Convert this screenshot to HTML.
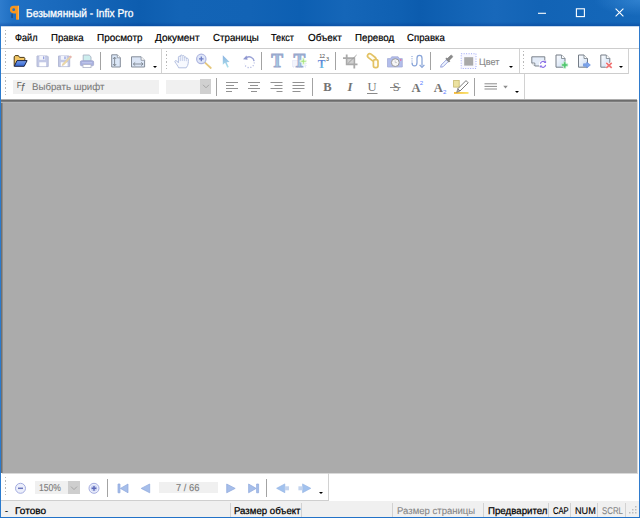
<!DOCTYPE html>
<html lang="ru">
<head>
<meta charset="utf-8">
<title>Безымянный - Infix Pro</title>
<style>
html,body{margin:0;padding:0;}
body{width:640px;height:518px;overflow:hidden;background:#fff;position:relative;font-family:"Liberation Sans",sans-serif;font-size:12px;color:#000;}
.abs{position:absolute;}
#title{left:0;top:0;width:640px;height:26px;background:radial-gradient(ellipse 46px 16px at 640px 0,rgba(70,150,225,.55),rgba(70,150,225,0)),linear-gradient(to bottom,rgba(0,50,130,0) 0,rgba(0,50,130,0) 22px,rgba(0,50,140,.35) 26px),linear-gradient(to right,#2e7ccd 0,#2070c3 12px,#1969bc 60px,#0d5daf 140px,#1364b6 180px,#1263b5 250px,#0d5fb2 300px,#1566b8 345px,#0f60b2 400px,#0c5cae 420px,#1465b7 470px,#1868ba 495px,#1263b5 540px,#1568ba 640px);}
#title:after{content:"";position:absolute;left:0;top:26px;width:640px;height:1px;background:rgba(20,100,184,.25);}
#bl{left:0;top:26px;width:1px;height:492px;background:#2a7acd;}
#br{left:639px;top:26px;width:1px;height:492px;background:#2f7bcd;}
#bb{left:0;top:517px;width:640px;height:1px;background:#2272c8;}
.hl{height:1px;background:#cdcdcd;}
.vl{width:1px;background:#d2d2d2;}
.sep{width:1px;background:#a3a3a3;}
.grip{width:1.2px;background:repeating-linear-gradient(to bottom,#b8b8b8 0,#b8b8b8 1.2px,rgba(255,255,255,0) 1.2px,rgba(255,255,255,0) 3.44px);}
#doc{left:1px;top:99px;width:636px;height:374px;box-shadow:1px 1px 0 rgba(171,171,171,.45);background:linear-gradient(to bottom,#adadad 0,#adadad 1px,#6c6c6c 1px,#6c6c6c 2px,#7e7e7e 2px,#7e7e7e 3px,#b4b4b4 3px,#b4b4b4 4px,rgba(171,171,171,0) 4px),linear-gradient(to right,#707070 0,#707070 1px,#8c8c8c 1px,#8c8c8c 1.6px,#ababab 1.6px);}
#status{left:1px;top:501px;width:638px;height:16px;background:#f0f0f0;}
.t{position:absolute;line-height:14px;white-space:nowrap;transform-origin:0 0;}
.box{background:#f0f0f0;}
.dd{width:0;height:0;border-left:2.2px solid transparent;border-right:2.2px solid transparent;border-top:2.6px solid #000;}
svg{position:absolute;overflow:visible;}
</style>
</head>
<body>
<!-- title bar -->
<div id="title" class="abs">
</div>
<div id="bl" class="abs"></div><div id="br" class="abs"></div>

<!-- menu -->
<div class="abs grip" style="left:4.6px;top:29.6px;height:15px"></div>
<div class="abs hl" style="left:1px;top:48px;width:638px"></div>

<!-- toolbar 1 -->
<div class="abs grip" style="left:4.6px;top:51.3px;height:18.6px"></div>
<div class="abs hl" style="left:1px;top:73px;width:628px"></div>
<div class="abs vl" style="left:161px;top:49px;height:24px"></div>
<div class="abs grip" style="left:166.2px;top:51.3px;height:18.6px"></div>
<div class="abs vl" style="left:519px;top:49px;height:24px"></div>
<div class="abs grip" style="left:523px;top:51.3px;height:18.6px"></div>
<div class="abs vl" style="left:628px;top:49px;height:25px"></div>
<div class="abs sep" style="left:100px;top:52px;height:18px"></div>
<div class="abs sep" style="left:261px;top:52px;height:18px"></div>
<div class="abs sep" style="left:335px;top:52px;height:18px"></div>
<div class="abs sep" style="left:430px;top:52px;height:18px"></div>
<div class="abs dd" style="left:152.7px;top:65.7px"></div>
<div class="abs dd" style="left:509.2px;top:65.7px"></div>
<div class="abs dd" style="left:619.4px;top:65.7px"></div>

<!-- toolbar 2 -->
<div class="abs grip" style="left:4.6px;top:76.8px;height:18.6px"></div>
<div class="abs vl" style="left:524px;top:74px;height:25px"></div>
<div class="abs box" style="left:13px;top:79.800px;width:145.800px;height:13.800px"></div>
<div class="abs box" style="left:166.200px;top:79.800px;width:34px;height:13.800px"></div>
<div class="abs" style="left:199.800px;top:79.400px;width:11.700px;height:14.200px;background:#d0d0d0"></div>
<div class="abs sep" style="left:216px;top:78px;height:18px"></div>
<div class="abs sep" style="left:312px;top:78px;height:18px"></div>
<div class="abs sep" style="left:474px;top:78px;height:18px"></div>
<div class="abs dd" style="left:515.3px;top:90.6px"></div>

<!-- document area -->
<div id="doc" class="abs"></div>

<!-- bottom toolbar -->
<div class="abs grip" style="left:4.6px;top:477px;height:18.6px"></div>
<div class="abs vl" style="left:328px;top:473px;height:28px"></div>
<div class="abs hl" style="left:1px;top:500px;width:328px;background:#cfcfcf"></div>
<div class="abs sep" style="left:107px;top:479px;height:18px"></div>
<div class="abs sep" style="left:266px;top:479px;height:18px"></div>
<div class="abs box" style="left:34.600px;top:481px;width:33.600px;height:13.400px"></div>
<div class="abs" style="left:68.200px;top:480.700px;width:11.700px;height:13.700px;background:#cecece"></div>
<div class="abs box" style="left:158.900px;top:481.800px;width:58.700px;height:11.700px"></div>
<div class="abs dd" style="left:319.1px;top:492.2px"></div>

<!-- status bar -->
<div id="status" class="abs"></div>
<div class="abs vl" style="left:230px;top:503px;height:14px"></div>
<div class="abs vl" style="left:301px;top:503px;height:14px"></div>
<div class="abs vl" style="left:392px;top:503px;height:14px"></div>
<div class="abs vl" style="left:483px;top:503px;height:14px"></div>
<div class="abs vl" style="left:548px;top:503px;height:14px"></div>
<div class="abs vl" style="left:570px;top:503px;height:14px"></div>
<div class="abs vl" style="left:597px;top:503px;height:14px"></div>
<div class="abs vl" style="left:625px;top:503px;height:14px"></div>
<div id="bb" class="abs"></div>
<!--TEXT-->
<div class="t" style="left:25.8px;top:5.95px;font-size:11.4px;color:#fff;transform:scaleX(0.8941) skewX(0.05deg);-webkit-text-stroke:0.3px #fff">Безымянный - Infix Pro</div>
<div class="t" style="left:15px;top:30.60px;font-size:10.1px;color:#000;transform:scaleX(0.9062) skewX(0.05deg);-webkit-text-stroke:0.2px #000">Файл</div>
<div class="t" style="left:50.7px;top:30.60px;font-size:10.1px;color:#000;transform:scaleX(0.9528) skewX(0.05deg);-webkit-text-stroke:0.2px #000">Правка</div>
<div class="t" style="left:97px;top:30.60px;font-size:10.1px;color:#000;transform:scaleX(0.9868) skewX(0.05deg);-webkit-text-stroke:0.2px #000">Просмотр</div>
<div class="t" style="left:155px;top:30.60px;font-size:10.1px;color:#000;transform:scaleX(0.9937) skewX(0.05deg);-webkit-text-stroke:0.2px #000">Документ</div>
<div class="t" style="left:212.5px;top:30.60px;font-size:10.1px;color:#000;transform:scaleX(0.9643) skewX(0.05deg);-webkit-text-stroke:0.2px #000">Страницы</div>
<div class="t" style="left:271.2px;top:30.60px;font-size:10.1px;color:#000;transform:scaleX(0.9047) skewX(0.05deg);-webkit-text-stroke:0.2px #000">Текст</div>
<div class="t" style="left:307.5px;top:30.60px;font-size:10.1px;color:#000;transform:scaleX(0.9804) skewX(0.05deg);-webkit-text-stroke:0.2px #000">Объект</div>
<div class="t" style="left:354.5px;top:30.60px;font-size:10.1px;color:#000;transform:scaleX(0.9646) skewX(0.05deg);-webkit-text-stroke:0.2px #000">Перевод</div>
<div class="t" style="left:406.7px;top:30.60px;font-size:10.1px;color:#000;transform:scaleX(0.9543) skewX(0.05deg);-webkit-text-stroke:0.2px #000">Справка</div>
<div class="t" style="left:479.2px;top:54.54px;font-size:9.4px;color:#8a8a8a;transform:scaleX(0.9707) skewX(0.05deg);-webkit-text-stroke:0.15px #8a8a8a">Цвет</div>
<div class="t" style="left:31.6px;top:80.27px;font-size:9.9px;color:#7a7a7a;transform:scaleX(0.9798) skewX(0.05deg);-webkit-text-stroke:0.1px #7a7a7a">Выбрать шрифт</div>
<div class="t" style="left:38.5px;top:480.53px;font-size:10px;color:#7a7a7a;transform:scaleX(0.8562) skewX(0.05deg);-webkit-text-stroke:0.1px #7a7a7a">150%</div>
<div class="t" style="left:176.2px;top:480.53px;font-size:10px;color:#7a7a7a;transform:scaleX(0.9348) skewX(0.05deg);-webkit-text-stroke:0.1px #7a7a7a">7 / 66</div>
<div class="t" style="left:5px;top:503.60px;font-size:9.8px;color:#000;transform:scaleX(0.9187) skewX(0.05deg);-webkit-text-stroke:0.2px #000">-</div>
<div class="t" style="left:14.6px;top:503.60px;font-size:9.8px;color:#000;transform:scaleX(1.0276) skewX(0.05deg);-webkit-text-stroke:0.25px #000">Готово</div>
<div class="t" style="left:233.5px;top:503.60px;font-size:9.8px;color:#000;transform:scaleX(0.9838) skewX(0.05deg);-webkit-text-stroke:0.25px #000">Размер объект</div>
<div class="t" style="left:397.3px;top:503.60px;font-size:9.8px;color:#868686;transform:scaleX(0.9748) skewX(0.05deg);-webkit-text-stroke:0.1px #868686">Размер страницы</div>
<div class="t" style="left:487.5px;top:503.60px;font-size:9.8px;color:#000;transform:scaleX(0.9896) skewX(0.05deg);-webkit-text-stroke:0.25px #000">Предварител</div>
<div class="t" style="left:553px;top:503.60px;font-size:9.8px;color:#000;transform:scaleX(0.7789) skewX(0.05deg);-webkit-text-stroke:0.15px #000">CAP</div>
<div class="t" style="left:575px;top:503.60px;font-size:9.8px;color:#000;transform:scaleX(0.9277) skewX(0.05deg);-webkit-text-stroke:0.15px #000">NUM</div>
<div class="t" style="left:602px;top:503.60px;font-size:9.8px;color:#868686;transform:scaleX(0.8033) skewX(0.05deg);-webkit-text-stroke:0.1px #868686">SCRL</div>
<!--/TEXT-->
<!--ICONS-->
<svg class="abs" style="left:0;top:0" width="640" height="518" viewBox="0 0 640 518">
<defs>
<linearGradient id="gFold" x1="0" y1="0" x2="0" y2="1"><stop offset="0" stop-color="#7aa0ec"/><stop offset="1" stop-color="#2f62d0"/></linearGradient>
<linearGradient id="gPage" x1="0" y1="0" x2="1" y2="1"><stop offset="0" stop-color="#ffffff"/><stop offset="1" stop-color="#c9dbf3"/></linearGradient>
<linearGradient id="gT" x1="0" y1="0" x2="0" y2="1"><stop offset="0" stop-color="#9fb4dc"/><stop offset="1" stop-color="#a9dcea"/></linearGradient>
<linearGradient id="gT3" x1="0" y1="0" x2="0" y2="1"><stop offset="0" stop-color="#5a6fd0"/><stop offset="1" stop-color="#6cc4e6"/></linearGradient>
<linearGradient id="gPtr" x1="0" y1="0" x2="0" y2="1"><stop offset="0" stop-color="#8ab0e0"/><stop offset="1" stop-color="#aee4ec"/></linearGradient>
<linearGradient id="gHl" x1="0" y1="0" x2="1" y2="0"><stop offset="0" stop-color="#f5b020"/><stop offset="1" stop-color="#f8e060"/></linearGradient>
</defs>

<!-- window icon (pilcrow) -->
<g>
<rect x="11.400" y="13.800" width="1.300" height="4.200" fill="#1d3a66" opacity=".75"/>
<path d="M13.700 5.800h5.300v13.200a.7.700 0 0 1-.7.700h-1.600a.7.700 0 0 1-.7-.7v-5.600h-2.300a3.800 3.800 0 0 1 0-7.600zM13.700 8.300a1.400 1.400 0 0 0 0 2.800 1.400 1.400 0 0 0 0-2.800z" fill="#f7951d" fill-rule="evenodd"/>
<rect x="17.800" y="5.800" width="1.200" height="13.600" fill="#fbb865" opacity=".8"/>
</g>
<!-- window controls -->
<g stroke="#fff" stroke-width="1.100" fill="none">
<path d="M538 13.3h8"/>
<rect x="576.4" y="8.8" width="8" height="7.8"/>
<path d="M615.6 8.6l7.8 7.8M623.4 8.6l-7.8 7.8"/>
</g>

<!-- open folder -->
<g>
<path d="M14.2 66.2 V56.8 l1-1.2 h3.2 l1.2 1.8 h4.6 l.6.8 v2.6" fill="#f3c765" stroke="#4a3a18" stroke-width="1" stroke-linejoin="round"/>
<path d="M14.3 66.3 L17 60.6 h10.1 L24.2 66.3z" fill="url(#gFold)" stroke="#1b2445" stroke-width="1" stroke-linejoin="round"/>
</g>
<!-- save (disabled) -->
<g>
<path d="M37 56h10.4l.8.8v9.8H37z" fill="#c3c9e6" stroke="#b5bbd6" stroke-width="1"/>
<rect x="39.3" y="56" width="5.8" height="3.8" fill="#f3f4fb"/>
<rect x="43.1" y="56.4" width="1.2" height="2.8" fill="#8c98dc"/>
<rect x="39.3" y="62.3" width="6.8" height="4" fill="#fff"/>
</g>
<!-- save as (disabled) -->
<g>
<path d="M58.5 56h10.4l.8.8v9.8H58.5z" fill="#c3c9e6" stroke="#b5bbd6" stroke-width="1"/>
<rect x="60.8" y="56" width="5.8" height="3.8" fill="#f3f4fb"/>
<rect x="64.4" y="56.4" width="1.2" height="2.8" fill="#8c98dc"/>
<rect x="60.8" y="62.3" width="6.8" height="4" fill="#fff"/>
<path d="M70.6 55.8l1 1-7.6 8-1.8.8.6-1.8z" fill="#f2dca0" stroke="#d8c4a0" stroke-width=".6"/>
<path d="M70 55.6l1.6 1.6-.9.9-1.6-1.6z" fill="#e8a8b8"/>
</g>
<!-- print (disabled) -->
<g>
<path d="M83.2 61V55h6l1.8 1.8V61z" fill="#cdeeee" stroke="#aab2c4" stroke-width=".9"/>
<rect x="80.4" y="60.8" width="13.2" height="5" rx="1.2" fill="#a9b1e0" stroke="#a0a6cc" stroke-width=".8"/>
<rect x="83" y="64.6" width="8" height="3" fill="#fff" stroke="#b0b4c8" stroke-width=".8"/>
<rect x="82" y="62.3" width="10" height=".9" fill="#c6ccee"/>
</g>
<!-- fit height -->
<g>
<path d="M111.7 54.8h5.6l3 3v9.2h-8.6z" fill="#dce8f8" stroke="#858d99" stroke-width="1"/>
<path d="M117.3 54.8v3h3" fill="#fff" stroke="#858d99" stroke-width=".8"/>
<path d="M114.6 57.2v8.6M113 59l1.6-1.9 1.6 1.9M113 64l1.6 1.9 1.6-1.9" fill="none" stroke="#7c848f" stroke-width=".9"/>
</g>
<!-- fit width -->
<g>
<path d="M131.5 56.8h9.6l3.5 3.5v6.7h-13.1z" fill="#dce6f6" stroke="#858d99" stroke-width="1"/>
<path d="M141.1 56.8v3.5h3.5" fill="#fff" stroke="#858d99" stroke-width=".8"/>
<path d="M133.4 64h9.6M135.2 62.4l-1.9 1.6 1.9 1.6M141.2 62.4l1.9 1.6-1.9 1.6" fill="none" stroke="#7c848f" stroke-width=".9"/>
</g>
<!-- hand -->
<g>
<path d="M178.600 67.800C178 66 176.200 63.800 175 62C174.400 60.800 175.800 60 176.800 61L178.400 62.800V57.200C178.400 55.900 180.300 55.900 180.300 57.200V56C180.300 54.700 182.300 54.700 182.300 56V56.400C182.300 55.200 184.300 55.200 184.300 56.400V57.600C184.500 56.600 186.300 56.600 186.300 57.800V59c.3-1 2-.9 2 .3C188.300 62 188.800 64.500 186.200 67.800Z" fill="#f7f9fe" stroke="#b4c0e0" stroke-width="1" stroke-linejoin="round"/>
<path d="M180.300 57.500v3.600M182.300 57v4M184.300 57.600v3.500M186.300 59.200v2" fill="none" stroke="#c0cae6" stroke-width=".9"/>
</g>
<!-- zoom -->
<g>
<path d="M205 62.600l5.800 5.400" stroke="#e6c87c" stroke-width="1.800" stroke-linecap="round"/>
<circle cx="201.300" cy="58.900" r="4.700" fill="#dfe6f8" stroke="#aeb6e0" stroke-width="1.200"/>
<path d="M199 58.900h4.600M201.300 56.600v4.600" stroke="#6c7cc4" stroke-width="1.300"/>
</g>
<!-- pointer -->
<path d="M222.800 55.300v9.400l2.300-2 2.200 5 1.500-.6-2.200-4.900 3-.3z" fill="url(#gPtr)"/>
<!-- rotate -->
<g>
<path d="M246.500 57.600a5 5 0 0 1 7.600 3.600" fill="none" stroke="#9aa2d6" stroke-width="1.400"/>
<path d="M243 59.200l3.600-3.800 1 4.400z" fill="#8f97d0"/>
<path d="M254.200 62.500a5 5 0 0 1-9.800 1.500" fill="none" stroke="#a6aedc" stroke-width="1.200" stroke-dasharray="1 1.800"/>
</g>
</svg>
<svg class="abs" style="left:0;top:0" width="640" height="518" viewBox="0 0 640 518">
<!-- T tools -->
<g font-family="'Liberation Serif',serif" font-weight="bold">
<text x="271.300" y="67.400" font-size="17.800" fill="url(#gT)" stroke="#98a8cc" stroke-width=".9" textLength="11.800" lengthAdjust="spacingAndGlyphs">T</text>
<rect x="292.500" y="60.500" width="13.500" height="6.500" fill="#f2f4fc" stroke="#d6daf2" stroke-width=".8" stroke-dasharray="1 1"/>
<text x="293.500" y="67.400" font-size="17.800" fill="url(#gT)" stroke="#98a8cc" stroke-width=".9" textLength="11.800" lengthAdjust="spacingAndGlyphs">T</text>
<path d="M300.200 60.300h2.200v-2.200h1.800v2.200h2.200v1.800h-2.200v2.200h-1.800v-2.200h-2.200z" fill="#a4e47c" stroke="#eefbe4" stroke-width=".9"/>
<text x="317.800" y="67.800" font-size="11.500" fill="url(#gT3)">T</text>
</g>
<g font-family="'Liberation Sans',sans-serif" fill="#4c4c4c" font-size="5.500">
<text x="319.300" y="58.300" letter-spacing="-.3">12</text>
<text x="326" y="61.300">3</text>
</g>
<!-- crop -->
<g>
<rect x="347.500" y="59" width="6" height="5" fill="#d0d0d0"/>
<path d="M346.700 54.600v9.700h10.800M343 58.200h11.300v10.300" fill="none" stroke="#a9a9a9" stroke-width="1.800"/>
<path d="M356.600 55l-8.400 8.200" stroke="#9a9a9a" stroke-width=".9"/>
</g>
<!-- chain -->
<g fill="#fffdf4" stroke="#e3c264" stroke-width="1.700">
<rect x="367" y="55.200" width="9.400" height="4.400" rx="2.200" transform="rotate(38 371.700 57.400)"/>
<rect x="373.400" y="59.600" width="4.600" height="8" rx="1.800"/>
</g>
<!-- camera -->
<g>
<path d="M387.500 58.600h3l1.200-1.800h6.400l1.200 1.800h3v8.400h-14.800z" fill="#b2bdec" stroke="#a6aed8" stroke-width=".8"/>
<circle cx="395.300" cy="62.600" r="3.900" fill="#f6f6f6" stroke="#989898" stroke-width="1"/>
<path d="M395.200 60.400v2.200h1.800" fill="none" stroke="#b0b0b0" stroke-width=".6"/>
<circle cx="400.700" cy="60" r=".8" fill="#f05a8c"/>
</g>
<!-- link text -->
<g fill="none" stroke="#88a4d8" stroke-width="1.250">
<path d="M412 56v6" stroke-dasharray="1 1.200" stroke="#9ab0dc"/>
<path d="M412 62.500c0 4.500 5 4.500 5 0v-4.200c0-3.800 5-3.800 5 0v7.500"/>
<path d="M419.600 64.800l2.400 2.600 2.400-2.600" />
</g>
<!-- eyedropper -->
<g>
<path d="M440.600 67.200l.6-2.200 5.200-5.200 1.800 1.800-5.200 5.200z" fill="#eef4ff" stroke="#8c98d8" stroke-width=".9"/>
<path d="M445.800 59l3.200 3.200 1-1-.8-.8 3.200-3.200c.9-.9-.9-2.700-1.800-1.800l-3.200 3.200-.8-.8z" fill="#8a8a8a" stroke="#6e6e6e" stroke-width=".5"/>
</g>
<!-- colour swatch -->
<rect x="461.200" y="53.700" width="14.800" height="14.800" fill="#f8f8ff" stroke="#a0aaf6" stroke-width="1" stroke-dasharray="1 1.460"/>
<rect x="464.200" y="57.200" width="9" height="8.400" fill="#a9a9a9"/>

<!-- page icons right -->
<g>
<path d="M531.800 56.800h13v9.200h-10l-3-3z" fill="#e4ecf8" stroke="#6e767f" stroke-width=".9" stroke-linejoin="round"/>
<path d="M531.800 63h3v3" fill="#fff" stroke="#6e767f" stroke-width=".8"/>
<circle cx="543" cy="64.300" r="4" fill="#fff"/>
<path d="M540.400 63.800a2.700 2.700 0 0 1 4.700-1.500M545.600 64.900a2.700 2.700 0 0 1-4.700 1.500" fill="none" stroke="#8a70e6" stroke-width="1.150"/>
<path d="M546.100 60.600v2.400h-2.400zM539.900 68v-2.400h2.400z" fill="#8a70e6"/>
</g>
<g>
<path d="M556 55h5.500l3.500 3.500v8.700h-9z" fill="url(#gPage)" stroke="#757d87" stroke-width="1"/>
<path d="M561.500 55v3.500h3.500" fill="#fff" stroke="#757d87" stroke-width=".8"/>
<path d="M563.500 61.800h2.400v2h2v2.400h-2v2h-2.400v-2h-2v-2.400h2z" fill="#52c872" stroke="#d8f4e0" stroke-width=".7"/>
</g>
<g>
<path d="M578.500 55h5.500l3.500 3.500v8.700h-9z" fill="url(#gPage)" stroke="#757d87" stroke-width="1"/>
<path d="M584 55v3.500h3.500" fill="#fff" stroke="#757d87" stroke-width=".8"/>
<path d="M583.500 63.800h3.300v-1.800l3.600 3-3.600 3v-1.800h-3.300z" fill="#7ea6ec" stroke="#6088d8" stroke-width=".6"/>
</g>
<g>
<path d="M600.800 55h5.500l3.500 3.500v8.700h-9z" fill="url(#gPage)" stroke="#757d87" stroke-width="1"/>
<path d="M606.300 55v3.500h3.500" fill="#fff" stroke="#757d87" stroke-width=".8"/>
<path d="M606.300 62.800l5.400 5M611.700 62.800l-5.400 5" stroke="#fff" stroke-width="3"/>
<path d="M606.300 62.800l5.400 5M611.700 62.800l-5.400 5" stroke="#f07272" stroke-width="1.700"/>
</g>
</svg>
<svg class="abs" style="left:0;top:0" width="640" height="518" viewBox="0 0 640 518">
<!-- toolbar 2 -->
<g fill="#5e5e5e">
<text x="16.700" y="88.400" font-size="8.400" font-family="'Liberation Sans',sans-serif">F</text>
<text x="21.200" y="91" font-size="10.500" font-style="italic" font-family="'Liberation Sans',sans-serif">f</text>
</g>
<path d="M203 84.800l3 3 3-3" fill="none" stroke="#a6a6a6" stroke-width="1"/>
<!-- align -->
<g stroke="#929292" stroke-width="1">
<path d="M226 82.500h12M226 85.500h8M226 88.500h12M226 91.500h6"/>
<path d="M248 82.500h12M250 85.500h8M248 88.500h12M251 91.500h6"/>
<path d="M270.500 82.500h12M274.500 85.500h8M270.500 88.500h12M276.500 91.500h6"/>
<path d="M292.500 82.500h12M292.500 85.500h12M292.500 88.500h12M292.500 91.500h8"/>
</g>
<!-- B I U S A A -->
<g font-family="'Liberation Serif',serif" fill="#747474" font-size="12.600">
<text x="323.200" y="91.400" font-weight="bold">B</text>
<text x="347.600" y="91.400" font-style="italic" font-weight="bold">I</text>
<text x="367.400" y="91.400">U</text>
<text x="392.800" y="91.400">S</text>
<text x="411.600" y="91.600" font-weight="bold">A</text>
<text x="433.800" y="91.600" font-weight="bold">A</text>
</g>
<path d="M367 93.500h10.500" stroke="#8a8a8a" stroke-width="1"/>
<path d="M390 87.500h10.600" stroke="#8a8a8a" stroke-width="1"/>
<g font-family="'Liberation Sans',sans-serif" fill="#5c82ff" font-size="6.200">
<text x="419.800" y="84.700">2</text>
<text x="443" y="93.500">2</text>
</g>
<!-- highlighter -->
<g>
<rect x="453.600" y="80.500" width="5.600" height="6.600" fill="#ece2a0" stroke="#c8ba6c" stroke-width=".8"/>
<rect x="454" y="92.100" width="14.500" height="1.700" fill="url(#gHl)"/>
<path d="M466 80.600l2.200 2.200-8.200 8.200-2.200-2.200z" fill="#fff" stroke="#6c6c6c" stroke-width=".9"/>
<path d="M457.800 88.800l2.200 2.200-3.400 1.400z" fill="#b4b4b4" stroke="#6c6c6c" stroke-width=".6"/>
</g>
<!-- line spacing -->
<path d="M484.500 83.800h12.500M484.500 86.400h12.500M484.500 89h12.500" stroke="#8c8c8c" stroke-width="1"/>
<path d="M503.200 85.800h4.600l-2.300 2.600z" fill="#8c8c8c"/>

<!-- bottom toolbar -->
<g>
<circle cx="20.500" cy="488.300" r="5" fill="#eceffb" stroke="#a4ace0" stroke-width="1"/>
<path d="M18 488.300h5" stroke="#6c76bc" stroke-width="1.500"/>
<circle cx="94" cy="488.300" r="5" fill="#eceffb" stroke="#a4ace0" stroke-width="1"/>
<circle cx="94" cy="488.300" r="3.200" fill="#ccd4f2"/>
<path d="M91.600 488.300h4.800M94 485.900v4.800" stroke="#5c68b8" stroke-width="1.400"/>
<path d="M71 486.600l3 3 3-3" fill="none" stroke="#a6a6a6" stroke-width="1"/>
</g>
<g fill="#a6beea" stroke="#8ea8dc" stroke-width=".7" stroke-linejoin="round">
<rect x="118" y="484" width="2" height="8.800"/>
<path d="M120.400 488.400l7.600-4.400v8.800z"/>
<path d="M141.200 488.400l8.500-4.400v8.800z"/>
<path d="M235.200 488.400l-8.500-4.400v8.800z"/>
<path d="M256.200 488.400l-7.600-4.400v8.800z"/>
<rect x="256.600" y="484" width="2" height="8.800"/>
</g>
<g>
<path d="M276.600 488.300l8.200-4.400v8.800z" fill="#a2c2ee" stroke="#90b0e2" stroke-width=".6"/>
<rect x="284.800" y="486.300" width="4.200" height="4" fill="#c4d4ee"/>
<path d="M310.800 488.300l-8.200-4.400v8.800z" fill="#a2c2ee" stroke="#90b0e2" stroke-width=".6"/>
<rect x="298.400" y="486.300" width="4.200" height="4" fill="#c4d4ee"/>
</g>
<!-- resize grip -->
<g fill="#bdbdbd">
<rect x="635" y="506" width="1.500" height="1.500"/>
<rect x="632" y="509" width="1.500" height="1.500"/><rect x="635" y="509" width="1.500" height="1.500"/>
<rect x="629" y="512" width="1.500" height="1.500"/><rect x="632" y="512" width="1.500" height="1.500"/><rect x="635" y="512" width="1.500" height="1.500"/>
</g>
</svg>
</body>
</html>
